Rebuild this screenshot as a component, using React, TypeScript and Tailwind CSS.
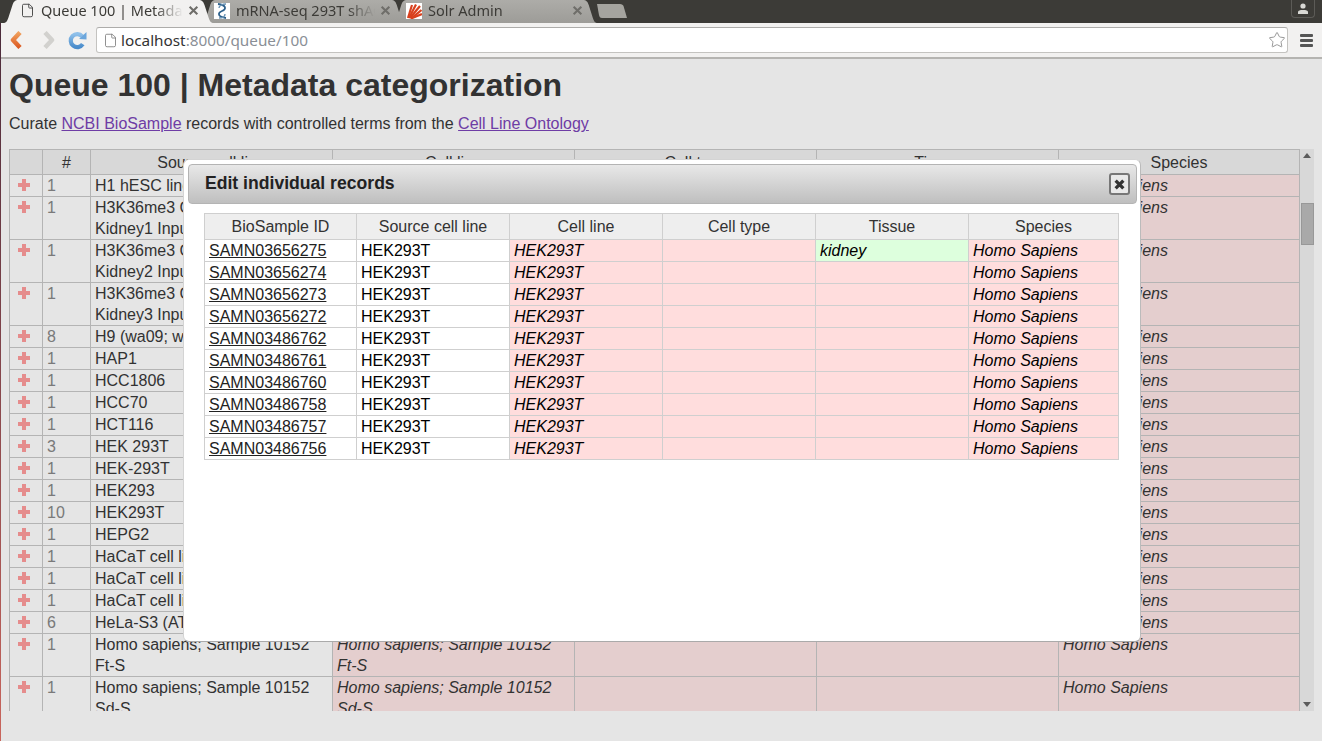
import { File, Star } from "lucide-react";

type Row = { n: number; source: string[]; cellLine?: string[] };

const rows: Row[] = [
  { n: 1, source: ["H1 hESC line"] },
  { n: 1, source: ["H3K36me3 ChIP-seq", "Kidney1 Input"] },
  { n: 1, source: ["H3K36me3 ChIP-seq", "Kidney2 Input"] },
  { n: 1, source: ["H3K36me3 ChIP-seq", "Kidney3 Input"] },
  { n: 8, source: ["H9 (wa09; wicell)"] },
  { n: 1, source: ["HAP1"] },
  { n: 1, source: ["HCC1806"] },
  { n: 1, source: ["HCC70"] },
  { n: 1, source: ["HCT116"] },
  { n: 3, source: ["HEK 293T"] },
  { n: 1, source: ["HEK-293T"] },
  { n: 1, source: ["HEK293"] },
  { n: 10, source: ["HEK293T"] },
  { n: 1, source: ["HEPG2"] },
  { n: 1, source: ["HaCaT cell line"] },
  { n: 1, source: ["HaCaT cell line"] },
  { n: 1, source: ["HaCaT cell line"] },
  { n: 6, source: ["HeLa-S3 (ATCC)"] },
  {
    n: 1,
    source: ["Homo sapiens; Sample 10152", "Ft-S"],
    cellLine: ["Homo sapiens; Sample 10152", "Ft-S"],
  },
  {
    n: 1,
    source: ["Homo sapiens; Sample 10152", "Sd-S"],
    cellLine: ["Homo sapiens; Sample 10152", "Sd-S"],
  },
];

const records = [
  "SAMN03656275",
  "SAMN03656274",
  "SAMN03656273",
  "SAMN03656272",
  "SAMN03486762",
  "SAMN03486761",
  "SAMN03486760",
  "SAMN03486758",
  "SAMN03486757",
  "SAMN03486756",
];

function PlusIcon() {
  return (
    <svg width="12" height="12" viewBox="0 0 12 12" className="block">
      <path d="M4 0h4v4h4v4H8v4H4V8H0V4h4z" fill="#ff9c9c" />
    </svg>
  );
}

function CloseGlyph({ size, width, color }: { size: number; width: number; color: string }) {
  return (
    <svg width={size} height={size} viewBox="0 0 10 10" className="shrink-0">
      <path d="M1.5 1.5l7 7M8.5 1.5l-7 7" fill="none" stroke={color} strokeWidth={width} />
    </svg>
  );
}

function TabShape({ active }: { active?: boolean }) {
  return (
    <svg
      className="absolute inset-0 h-full w-full"
      viewBox="0 0 200 23"
      preserveAspectRatio="none"
    >
      <defs>
        <linearGradient id="inactiveTab" x1="0" y1="0" x2="0" y2="1">
          <stop offset="0" stopColor="#adaca8" />
          <stop offset="1" stopColor="#9d9c98" />
        </linearGradient>
      </defs>
      <path
        d="M0 23C3 23 4 21 5 18L9 5C10 2 11 0 15 0H185C189 0 190 2 191 5L195 18C196 21 197 23 200 23Z"
        fill={active ? "#f2f1f0" : "url(#inactiveTab)"}
      />
    </svg>
  );
}

function Tab({
  title,
  active,
  icon,
  className,
}: {
  title: string;
  active?: boolean;
  icon: React.ReactNode;
  className: string;
}) {
  return (
    <div className={`relative h-[23px] shrink-0 ${className}`}>
      <TabShape active={active} />
      <div className="relative flex h-full items-center pb-[2px] pr-[15px]">
        <span className="flex h-4 w-4 shrink-0 items-center justify-center">{icon}</span>
        <span className="ml-[6px] flex-1 overflow-hidden whitespace-nowrap text-[14.5px] leading-[21px] text-[#3c3b37] [mask-image:linear-gradient(to_right,black_80%,transparent_100%)]">
          {title}
        </span>
        <span className="ml-[5px] flex">
          <CloseGlyph size={11} width={1.9} color="#6f6e6a" />
        </span>
      </div>
    </div>
  );
}

function DnaIcon() {
  return (
    <svg width="16" height="16" viewBox="0 0 16 16" className="bg-white">
      <path d="M4 1c8 1 9 5 4 7S4 14 12 15" fill="none" stroke="#2b5f8a" strokeWidth="1.8" />
      <path d="M12 1C8 1 5 3 5 5M11 11c0 2-2 4-6 4" fill="none" stroke="#6b93b3" strokeWidth="1.4" />
    </svg>
  );
}

function SolrIcon() {
  return (
    <svg width="16" height="16" viewBox="0 0 16 16" className="bg-white">
      <g stroke="#d9411e" strokeWidth="2.2">
        <path d="M2 15L6 2" />
        <path d="M3 15L10 1.5" />
        <path d="M4 15L14 3" />
        <path d="M5 15.5L15.5 7" />
        <path d="M5 15.5L16 11" />
      </g>
    </svg>
  );
}

function BrowserChrome() {
  return (
    <div className="font-['Noto_Sans',sans-serif]">
      <div className="flex h-[23px] items-start justify-between bg-[#3c3b37] pl-[3px]">
        <div className="flex items-start">
          <Tab
            active
            className="z-10 w-[211px] pl-[16px]"
            title="Queue 100 | Metadata categorization"
            icon={<File size={15} strokeWidth={1.5} className="text-[#444]" />}
          />
          <Tab
            className="z-[5] ml-[-13px] w-[205px] pl-[13px]"
            title="mRNA-seq 293T shAGO2"
            icon={<DnaIcon />}
          />
          <Tab className="ml-[-14px] w-[206px] pl-[14px]" title="Solr Admin" icon={<SolrIcon />} />
          <svg width="34" height="16" viewBox="0 0 34 16" className="ml-[-4px] mt-[3px]">
            <path d="M3 1H26C28 1 29 2 29.500 3L33 15H8C6 15 5.500 14 5 12Z" fill="#a5a49f" />
          </svg>
        </div>
        <div className="mr-[7px] flex h-[18px] w-[24px] items-center justify-center rounded-b-[4px] border border-t-0 border-[#5c5b57]">
          <svg width="10" height="11" viewBox="0 0 10 11">
            <circle cx="5" cy="3" r="2.6" fill="#d8d8d4" />
            <path d="M0 11V9C0 7.500 2 7 5 7S10 7.500 10 9V11Z" fill="#d8d8d4" />
          </svg>
        </div>
      </div>
      <div className="flex h-[36px] items-center border-b-[2px] border-[#b5b4b1] bg-[#f2f1f0]">
        <div className="flex w-[96px] items-center pl-[10px]">
          <svg width="14" height="18" viewBox="0 0 14 18">
            <defs>
              <linearGradient id="backArrow" x1="0" y1="0" x2="0" y2="1">
                <stop offset="0" stopColor="#f0a15e" />
                <stop offset="1" stopColor="#dc5a22" />
              </linearGradient>
            </defs>
            <path d="M10 1.500L3 9l7 7.500" fill="none" stroke="url(#backArrow)" strokeWidth="4.500" strokeLinejoin="round" />
          </svg>
          <svg width="14" height="18" viewBox="0 0 14 18" className="ml-[17px]">
            <path d="M4 1.500l7 7.500-7 7.500" fill="none" stroke="#d2d1ce" strokeWidth="4.500" strokeLinejoin="round" />
          </svg>
          <svg width="19" height="19" viewBox="0 0 18 18" className="ml-[13px]">
            <defs>
              <linearGradient id="reloadArrow" x1="0" y1="0" x2="0" y2="1">
                <stop offset="0" stopColor="#8fc0ea" />
                <stop offset="1" stopColor="#4a8ccb" />
              </linearGradient>
            </defs>
            <path
              d="M14 12.500A6.200 6.200 0 1 1 13.500 5"
              fill="none"
              stroke="url(#reloadArrow)"
              strokeWidth="4"
            />
            <path d="M10.500 7.500L17.500 8V1Z" fill="#6ba6dc" />
          </svg>
        </div>
        <div className="flex h-[26px] w-[1192px] items-center rounded-[3px] border border-[#c4c3c0] border-t-[#adacaa] bg-white pl-[6px]">
          <File size={15} strokeWidth={1.3} className="text-[#777]" />
          <span className="ml-[3px] text-[15.3px] text-[#333]">
            localhost<span className="text-[#8a8f96]">:8000/queue/100</span>
          </span>
          <Star size={18} strokeWidth={1.2} className="ml-auto mr-[1px] text-[#8c8c8c]" />
        </div>
        <div className="ml-[12px] flex w-[13px] flex-col gap-[2px]">
          <div className="h-[3px] rounded-[1px] bg-[#555]" />
          <div className="h-[3px] rounded-[1px] bg-[#555]" />
          <div className="h-[3px] rounded-[1px] bg-[#555]" />
        </div>
      </div>
    </div>
  );
}

function QueueTable() {
  const th = "border border-[#c9c9c9] border-t-0 font-normal text-center px-1 pt-[1px] h-[24px] leading-[23px] bg-[#f1f1f1]";
  const td = "border border-[#c9c9c9] px-1 align-top leading-[21px] whitespace-nowrap overflow-hidden";
  const pink = `${td} bg-[#fee6e6] italic`;
  return (
    <div className="mt-[14px] flex h-[562px] w-[1305px] overflow-hidden">
      <table className="w-[1290px] table-fixed self-start border-collapse border-t border-[#c9c9c9] text-[16px] text-[#383838]">
        <colgroup>
          <col className="w-[33px]" />
          <col className="w-[48px]" />
          <col className="w-[242px]" />
          <col className="w-[242px]" />
          <col className="w-[242px]" />
          <col className="w-[242px]" />
          <col className="w-[241px]" />
        </colgroup>
        <thead>
          <tr>
            <th className={th}></th>
            <th className={th}>#</th>
            <th className={th}>Source cell line</th>
            <th className={th}>Cell line</th>
            <th className={th}>Cell type</th>
            <th className={th}>Tissue</th>
            <th className={th}>Species</th>
          </tr>
        </thead>
        <tbody>
          {rows.map((r, i) => (
            <tr key={i}>
              <td className={td}>
                <div className="ml-[4px] mt-[4px] pb-[5px]">
                  <PlusIcon />
                </div>
              </td>
              <td className={`${td} text-[#888]`}>{r.n}</td>
              <td className={td}>
                {r.source.map((l) => (
                  <div key={l}>{l}</div>
                ))}
              </td>
              <td className={pink}>
                {r.cellLine?.map((l) => (
                  <div key={l}>{l}</div>
                ))}
              </td>
              <td className={pink}></td>
              <td className={pink}></td>
              <td className={pink}>Homo Sapiens</td>
            </tr>
          ))}
        </tbody>
      </table>
      <div className="flex h-full w-[15px] flex-col items-center bg-[#f1f1f1]">
        <div className="mt-[4px] h-0 w-0 border-x-[4px] border-b-[5px] border-x-transparent border-b-[#666]" />
        <div className="mt-[46px] h-[40px] w-[11px] bg-[#bdbdbd] outline outline-1 outline-[#aaa]" />
        <div className="mb-[4px] mt-auto h-0 w-0 border-x-[4px] border-t-[5px] border-x-transparent border-t-[#666]" />
      </div>
    </div>
  );
}

function RecordsDialog() {
  const th = "border border-[#cfcfcf] bg-[#eeeeee] font-normal text-center h-[26px] text-[#333]";
  const td = "border border-[#cfcfcf] px-1 h-[22px] leading-[21px] text-black whitespace-nowrap overflow-hidden";
  const pink = `${td} bg-[#ffdddd] italic`;
  return (
    <div className="absolute left-[183px] top-[159px] h-[483px] w-[958px] rounded-[6px] border border-[#d4d4d4] border-b-[#aaaaaa] border-r-[#bbbbbb] bg-white pb-[3px] pl-[4px] pr-[3px] pt-[4px]">
      <div className="flex h-[40px] items-center justify-between rounded-[4px] border border-[#b4b4b4] bg-gradient-to-b from-[#e8e8e8] to-[#bfbfbf] pl-[16px] pr-[6px]">
        <span className="pb-[2px] text-[17.6px] font-bold text-[#222]">Edit individual records</span>
        <div className="flex h-[22px] w-[21px] items-center justify-center rounded-[3px] border-2 border-[#777] bg-[#e9e9e9]">
          <CloseGlyph size={11} width={3} color="#333" />
        </div>
      </div>
      <table className="ml-[16px] mt-[9px] w-[914px] table-fixed border-collapse text-[16px]">
        <colgroup>
          <col className="w-[152px]" />
          <col className="w-[153px]" />
          <col className="w-[153px]" />
          <col className="w-[153px]" />
          <col className="w-[153px]" />
          <col className="w-[150px]" />
        </colgroup>
        <thead>
          <tr>
            <th className={th}>BioSample ID</th>
            <th className={th}>Source cell line</th>
            <th className={th}>Cell line</th>
            <th className={th}>Cell type</th>
            <th className={th}>Tissue</th>
            <th className={th}>Species</th>
          </tr>
        </thead>
        <tbody>
          {records.map((id, i) => (
            <tr key={id}>
              <td className={td}>
                <a href="#" className="text-[#222] underline">
                  {id}
                </a>
              </td>
              <td className={td}>HEK293T</td>
              <td className={pink}>HEK293T</td>
              <td className={pink}></td>
              {i === 0 ? (
                <td className={`${td} bg-[#ddffdd] italic`}>kidney</td>
              ) : (
                <td className={pink}></td>
              )}
              <td className={pink}>Homo Sapiens</td>
            </tr>
          ))}
        </tbody>
      </table>
    </div>
  );
}

export default function App() {
  return (
    <div className="relative h-[741px] w-[1322px] overflow-hidden bg-white font-['Liberation_Sans',Arial,sans-serif]">
      <BrowserChrome />
      <main className="pl-[9px]">
        <h1 className="mt-[7px] text-[32px] font-bold leading-[38px] text-[#383838]">
          Queue 100 | Metadata categorization
        </h1>
        <p className="mt-[9px] text-[16px] leading-[22px] text-[#383838]">
          Curate{" "}
          <a href="#" className="text-[#7b44b8] underline">
            NCBI BioSample
          </a>{" "}
          records with controlled terms from the{" "}
          <a href="#" className="text-[#7b44b8] underline">
            Cell Line Ontology
          </a>
        </p>
        <QueueTable />
      </main>
      {/* modal backdrop */}
      <div className="absolute inset-x-0 bottom-0 top-[59px] bg-black/10" />
      {/* window edge */}
      <div className="absolute bottom-0 left-0 top-[23px] w-[1px] bg-gradient-to-b from-[#4a2a3a] to-[#c9655c]" />
      <RecordsDialog />
    </div>
  );
}
